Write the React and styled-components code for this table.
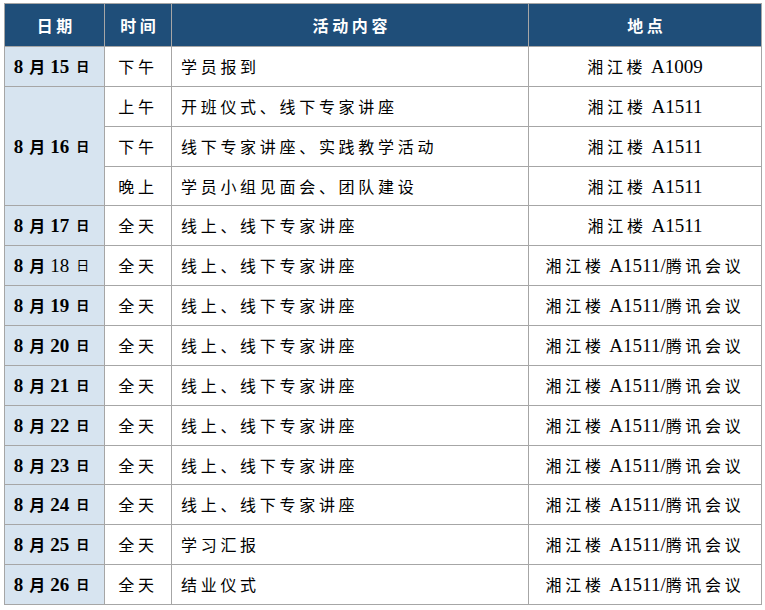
import React from 'react';
import styled, { createGlobalStyle } from 'styled-components';

const GlobalStyle = createGlobalStyle`
	body {
		margin: 0;
		background: #ffffff;
		font-family: "Liberation Serif", "Noto Sans CJK SC", serif;
		color: #000000;
	}
`;

const Page = styled.div`
	padding: 3px 4px;
`;

const Table = styled.table`
	border-collapse: collapse;
	table-layout: fixed;
	width: 757px;
`;

const HeadCell = styled.th`
	background: #1f4e79;
	color: #ffffff;
	height: 42px;
	padding: 0;
	border: 1px solid #a6a6a6;
	text-align: center;
	font-family: "Noto Sans CJK SC", sans-serif;
	font-size: 16px;
	font-weight: 700;
	letter-spacing: 3.7px;
	text-indent: 3.7px;
`;

const Row = styled.tr`
	height: 39.86px;
`;

const Cell = styled.td`
	border: 1px solid #a6a6a6;
	padding: 0 ${(p) => (p.$left ? '9px' : '0')};
	text-align: ${(p) => (p.$left ? 'left' : 'center')};
	white-space: nowrap;
	font-size: 19px;
	line-height: 1;
`;

const DateCell = styled(Cell)`
	background: #d7e4f0;
	padding-right: 6px;
`;

const Zh = styled.span`
	font-family: "Noto Sans CJK SC", sans-serif;
	font-size: 16px;
	letter-spacing: 3.7px;
`;

const Num = styled.span`
	font-weight: ${(p) => (p.$bold ? 700 : 400)};
`;

const Month = styled.span`
	font-family: "Noto Sans CJK SC", sans-serif;
	font-size: 16px;
	font-weight: 700;
	margin: 0 5px 0 6px;
`;

const Day = styled.span`
	font-family: "Noto Sans CJK SC", sans-serif;
	font-size: 13px;
	font-weight: ${(p) => (p.$bold ? 700 : 400)};
	margin-left: 7px;
	vertical-align: 2px;
`;

const DateLabel = ({ day, bold = true }) => (
	<>
		<Num $bold>8</Num>
		<Month>月</Month>
		<Num $bold={bold}>{day}</Num>
		<Day $bold={bold}>日</Day>
	</>
);

const Place = ({ room, online }) => (
	<>
		<Zh>湘江楼</Zh> A{room}
		{online && (
			<>
				/<Zh>腾讯会议</Zh>
			</>
		)}
	</>
);

const onlineDays = ['18', '19', '20', '21', '22', '23', '24'];

const App = () => (
	<Page>
		<GlobalStyle />
		<Table>
			<colgroup>
				<col style={{ width: 100 }} />
				<col style={{ width: 67 }} />
				<col style={{ width: 357 }} />
				<col style={{ width: 233 }} />
			</colgroup>
			<thead>
				<tr>
					<HeadCell>日期</HeadCell>
					<HeadCell>时间</HeadCell>
					<HeadCell>活动内容</HeadCell>
					<HeadCell>地点</HeadCell>
				</tr>
			</thead>
			<tbody>
				<Row>
					<DateCell><DateLabel day="15" /></DateCell>
					<Cell><Zh>下午</Zh></Cell>
					<Cell $left><Zh>学员报到</Zh></Cell>
					<Cell><Place room="1009" /></Cell>
				</Row>
				<Row>
					<DateCell rowSpan={3}><DateLabel day="16" /></DateCell>
					<Cell><Zh>上午</Zh></Cell>
					<Cell $left><Zh>开班仪式、线下专家讲座</Zh></Cell>
					<Cell><Place room="1511" /></Cell>
				</Row>
				<Row>
					<Cell><Zh>下午</Zh></Cell>
					<Cell $left><Zh>线下专家讲座、实践教学活动</Zh></Cell>
					<Cell><Place room="1511" /></Cell>
				</Row>
				<Row>
					<Cell><Zh>晚上</Zh></Cell>
					<Cell $left><Zh>学员小组见面会、团队建设</Zh></Cell>
					<Cell><Place room="1511" /></Cell>
				</Row>
				<Row>
					<DateCell><DateLabel day="17" /></DateCell>
					<Cell><Zh>全天</Zh></Cell>
					<Cell $left><Zh>线上、线下专家讲座</Zh></Cell>
					<Cell><Place room="1511" /></Cell>
				</Row>
				{onlineDays.map((d) => (
					<Row key={d}>
						<DateCell><DateLabel day={d} bold={d !== '18'} /></DateCell>
						<Cell><Zh>全天</Zh></Cell>
						<Cell $left><Zh>线上、线下专家讲座</Zh></Cell>
						<Cell><Place room="1511" online /></Cell>
					</Row>
				))}
				<Row>
					<DateCell><DateLabel day="25" /></DateCell>
					<Cell><Zh>全天</Zh></Cell>
					<Cell $left><Zh>学习汇报</Zh></Cell>
					<Cell><Place room="1511" online /></Cell>
				</Row>
				<Row>
					<DateCell><DateLabel day="26" /></DateCell>
					<Cell><Zh>全天</Zh></Cell>
					<Cell $left><Zh>结业仪式</Zh></Cell>
					<Cell><Place room="1511" online /></Cell>
				</Row>
			</tbody>
		</Table>
	</Page>
);

export default App;
